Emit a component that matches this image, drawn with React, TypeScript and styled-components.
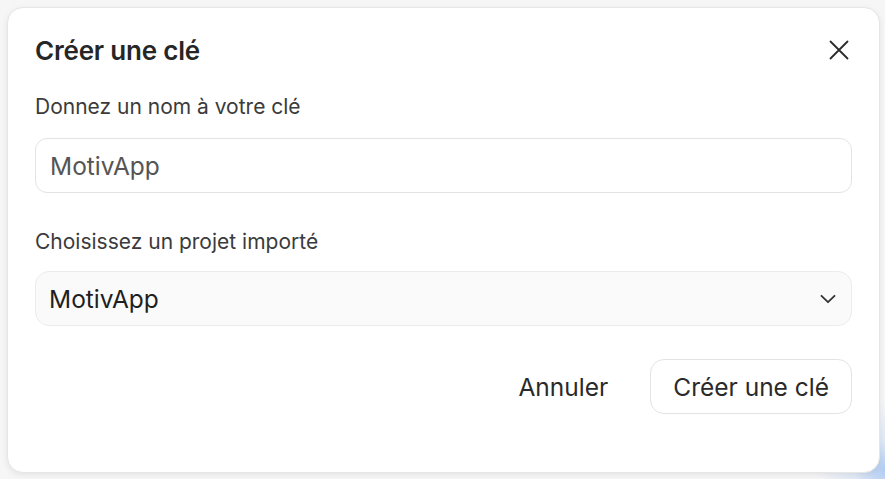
import styled, { createGlobalStyle } from "styled-components";

const GlobalStyle = createGlobalStyle`
  html, body {
    margin: 0;
    padding: 0;
    background: #fbfbfb;
    font-family: Inter, "Noto Sans", "Liberation Sans", sans-serif;
  }
  * { box-sizing: border-box; }
`;

const CloseIcon = () => (
  <svg width="20" height="20" viewBox="0 0 20 20" fill="none" stroke="#2a2a2a" strokeWidth="1.8" strokeLinecap="round">
    <path d="M1.5 1.5l17 17M18.5 1.5l-17 17" />
  </svg>
);

const Chevron = () => (
  <svg width="16" height="10" viewBox="0 0 16 10" fill="none" stroke="#333" strokeWidth="1.8" strokeLinecap="round" strokeLinejoin="round">
    <path d="M1.5 1.8L8 8.2l6.5-6.4" />
  </svg>
);

export default function App() {
  return (
    <>
      <GlobalStyle />
      <Backdrop>
        <Dialog>
          <Header>
            <Title>Créer une clé</Title>
            <CloseButton aria-label="Fermer">
              <CloseIcon />
            </CloseButton>
          </Header>

          <Field>
            <Label>Donnez un nom à votre clé</Label>
            <TextInput defaultValue="MotivApp" />
          </Field>

          <Field $spaced>
            <Label>Choisissez un projet importé</Label>
            <SelectBox>
              <span>MotivApp</span>
              <Chevron />
            </SelectBox>
          </Field>

          <Actions>
            <GhostButton>Annuler</GhostButton>
            <OutlineButton>Créer une clé</OutlineButton>
          </Actions>
        </Dialog>
      </Backdrop>
    </>
  );
}

const Backdrop = styled.div`
  width: 885px;
  height: 479px;
  padding: 7px 5px 6px 7px;
  background:
    radial-gradient(circle at 885px 470px, rgba(120, 170, 240, 0.55) 0, rgba(160, 195, 245, 0.25) 30px, rgba(255, 255, 255, 0) 70px),
    #f6f6f6;
`;

const Dialog = styled.div`
  height: 466px;
  background: #fff;
  border: 1px solid #e6e6e6;
  border-radius: 16px;
  box-shadow: 0 2px 6px rgba(0, 0, 0, 0.08);
  padding: 26px 27px 0 27px;
  display: flex;
  flex-direction: column;
`;

const Header = styled.div`
  display: flex;
  align-items: center;
  justify-content: space-between;
  height: 32px;
`;

const Title = styled.h2`
  margin: 0;
  font-size: 26px;
  font-weight: 600;
  letter-spacing: -0.2px;
  color: #262626;
`;

const CloseButton = styled.button`
  border: none;
  background: none;
  padding: 0;
  margin-right: 3px;
  display: flex;
  cursor: pointer;
`;

const Field = styled.div<{ $spaced?: boolean }>`
  display: flex;
  flex-direction: column;
  gap: ${(p) => (p.$spaced ? "15px" : "17px")};
  margin-top: ${(p) => (p.$spaced ? "35px" : "27px")};
`;

const Label = styled.label`
  font-size: 21px;
  line-height: 28px;
  color: #3b3b3b;
`;

const TextInput = styled.input`
  height: 55px;
  border: 1px solid #e3e3e3;
  border-radius: 12px;
  padding: 0 14px;
  font-family: inherit;
  font-size: 24.5px;
  color: #555;
  background: #fff;
  outline: none;
`;

const SelectBox = styled.div`
  height: 55px;
  border: 1px solid #ececec;
  border-radius: 14px;
  padding: 0 15px 0 13px;
  display: flex;
  align-items: center;
  justify-content: space-between;
  background: #fafafa;
  font-size: 24.5px;
  color: #1f1f1f;
`;

const Actions = styled.div`
  display: flex;
  justify-content: flex-end;
  align-items: center;
  gap: 22px;
  margin-top: 33px;
`;

const GhostButton = styled.button`
  border: none;
  background: none;
  font-family: inherit;
  font-size: 24.5px;
  color: #2a2a2a;
  padding: 0 20px;
  height: 55px;
`;

const OutlineButton = styled.button`
  height: 55px;
  border: 1px solid #e3e3e3;
  border-radius: 14px;
  background: #fff;
  font-family: inherit;
  font-size: 24.5px;
  color: #2a2a2a;
  padding: 0 22px;
`;
